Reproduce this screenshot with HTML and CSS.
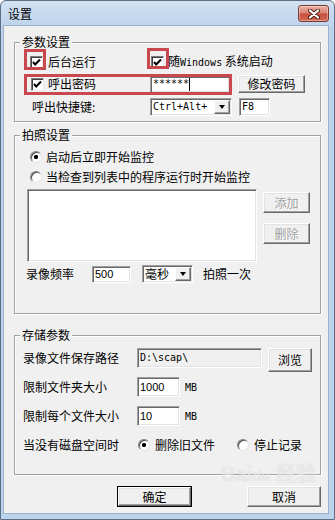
FILE: index.html
```html
<!DOCTYPE html>
<html lang="zh-CN">
<head>
    <meta charset="UTF-8">
    <meta name="viewport" content="width=device-width, initial-scale=1.0">
    <title>设置</title>
    <link rel="stylesheet" href="styles.css">
</head>
<body>
    <div class="window">
        <div class="titlebar">
            <span class="title">设置</span>
            <span class="close">
                <svg width="14" height="10" viewBox="0 0 14 10">
                    <path d="M3 1.5 L11 8.5 M11 1.5 L3 8.5" stroke="#4a1a14" stroke-width="4" stroke-linecap="round"/>
                    <path d="M3 1.5 L11 8.5 M11 1.5 L3 8.5" stroke="#fff" stroke-width="2.2" stroke-linecap="round"/>
                </svg>
            </span>
        </div>

        <div class="client">
            <!-- 参数设置 -->
            <div class="group group-params">
                <span class="legend">参数设置</span>
                <div class="row row-bg">
                    <span class="check check-bg">
                        <span class="box"><svg width="11" height="11" viewBox="0 0 11 11"><path d="M2 5 L4.2 7.5 L9 2.5" stroke="#000" stroke-width="2" fill="none"/></svg></span>
                        后台运行
                    </span>
                    <span class="check check-startup">
                        <span class="box"><svg width="11" height="11" viewBox="0 0 11 11"><path d="M2 5 L4.2 7.5 L9 2.5" stroke="#000" stroke-width="2" fill="none"/></svg></span>
                        <span>随<span class="mono">Windows</span> 系统启动</span>
                    </span>
                </div>
                <div class="row row-pwd">
                    <span class="check check-pwd">
                        <span class="box"><svg width="11" height="11" viewBox="0 0 11 11"><path d="M2 5 L4.2 7.5 L9 2.5" stroke="#000" stroke-width="2" fill="none"/></svg></span>
                        呼出密码
                    </span>
                    <span class="edit edit-pass mono">******<span class="caret"></span></span>
                    <span class="btn btn-change">修改密码</span>
                </div>
                <div class="row row-hotkey">
                    <span class="label label-hotkey">呼出快捷键:</span>
                    <span class="combo combo-keys"><span class="mono">Ctrl+Alt+</span><span class="drop"><span class="arrow"></span></span></span>
                    <span class="edit edit-key mono">F8</span>
                </div>

                <!-- annotation frames -->
                <span class="mark mark-bg"></span>
                <span class="mark mark-startup"></span>
                <span class="mark mark-pwd"></span>
            </div>

            <!-- 拍照设置 -->
            <div class="group group-photo">
                <span class="legend">拍照设置</span>
                <div class="row row-radio">
                    <span class="radio on"></span>
                    <span>启动后立即开始监控</span>
                </div>
                <div class="row row-radio row-radio-2">
                    <span class="radio"></span>
                    <span>当检查到列表中的程序运行时开始监控</span>
                </div>
                <div class="row row-list">
                    <div class="listbox"></div>
                    <div class="side">
                        <span class="btn btn-off btn-add">添加</span>
                        <span class="btn btn-off btn-del">删除</span>
                    </div>
                </div>
                <div class="row row-freq">
                    <span class="label label-freq">录像频率</span>
                    <span class="edit edit-freq num">500</span>
                    <span class="combo combo-unit"><span>毫秒</span><span class="drop"><span class="arrow"></span></span></span>
                    <span class="label label-once">拍照一次</span>
                </div>
            </div>

            <!-- 存储参数 -->
            <div class="group group-store">
                <span class="legend">存储参数</span>
                <div class="row row-path">
                    <span class="label label-store">录像文件保存路径</span>
                    <span class="edit edit-path mono">D:\scap\</span>
                    <span class="btn btn-browse">浏览</span>
                </div>
                <div class="row row-size">
                    <span class="label label-store">限制文件夹大小</span>
                    <span class="edit edit-size num">1000</span>
                    <span class="unit mono">MB</span>
                </div>
                <div class="row row-size row-size-2">
                    <span class="label label-store">限制每个文件大小</span>
                    <span class="edit edit-size num">10</span>
                    <span class="unit mono">MB</span>
                </div>
                <div class="row row-disk">
                    <span class="label label-disk">当没有磁盘空间时</span>
                    <span class="option"><span class="radio on"></span>删除旧文件</span>
                    <span class="option option-stop"><span class="radio"></span>停止记录</span>
                </div>
            </div>

            <div class="row row-actions">
                <span class="btn btn-default">确定</span>
                <span class="btn btn-cancel">取消</span>
            </div>
        </div>

        <span class="watermark">Bai<span class="paw">du</span> 经验</span>
    </div>
</body>
</html>
```

FILE: styles.css
```css
* {
    box-sizing: border-box;
}
body {
    margin: 0;
    font-family: "Noto Sans CJK SC", sans-serif;
    font-size: 12px;
    line-height: 14px;
    color: #000;
    background: #fff;
}
.mono {
    font-family: "DejaVu Sans Mono", "Noto Sans CJK SC", monospace;
    font-size: 10px;
}
.num {
    font-family: "Liberation Sans", sans-serif;
    font-size: 11px;
}

/* window frame */
.window {
    position: relative;
    width: 335px;
    height: 520px;
    display: flex;
    flex-direction: column;
    padding: 0 6px 6px 3px;
    border: 1px solid #5d6f86;
    border-radius: 6px 6px 0 0;
    background: linear-gradient(#d2e1f2, #bdd3ec 26px, #bcd3ec);
}
.titlebar {
    height: 25px;
    display: flex;
    justify-content: space-between;
    align-items: flex-start;
}
.title {
    margin: 6px 0 0 4px;
    font-size: 12px;
}
.close {
    width: 31px;
    height: 17px;
    margin: 4px -1px 0 0;
    display: flex;
    align-items: center;
    justify-content: center;
    border: 1px solid #7a3b32;
    border-radius: 3px;
    background: linear-gradient(#eab0a3, #d98373 45%, #c7503f 55%, #d26a52);
    box-shadow: inset 0 0 0 1px rgba(255,255,255,0.35);
}
.client {
    flex: 1;
    padding: 16px 0 0 10px;
    background: #f0f0f0;
    box-shadow: 0 0 0 1px #9fb4cc;
}

/* group boxes */
.group {
    position: relative;
    width: 307px;
    border: 1px solid #a0a0a0;
    box-shadow: inset 1px 1px 0 #fff, 1px 1px 0 #fff;
}
.legend {
    position: absolute;
    top: -8px;
    left: 5px;
    padding: 0 2px;
    background: #f0f0f0;
}
.group-params {
    height: 80px;
    padding-top: 12px;
}
.group-photo {
    height: 179px;
    margin-top: 13px;
    padding-top: 14px;
}
.group-store {
    height: 140px;
    margin-top: 21px;
    padding-top: 12px;
}

.row {
    display: flex;
    align-items: center;
}
.label {
    white-space: nowrap;
}

/* checkboxes and radios */
.check {
    display: flex;
    align-items: center;
    white-space: nowrap;
}
.box {
    width: 13px;
    height: 13px;
    flex: none;
    display: flex;
    align-items: center;
    justify-content: center;
    background: #fff;
    border: 1px solid;
    border-color: #7c7c7c #e8e8e8 #e8e8e8 #7c7c7c;
    box-shadow: inset 1px 1px 0 #404040;
}
.radio {
    width: 12px;
    height: 12px;
    flex: none;
    border-radius: 50%;
    background: #fff;
    border: 1px solid;
    border-color: #808080 #e4e4e4 #e4e4e4 #808080;
    box-shadow: inset 1px 1px 0 #505050;
}
.radio.on {
    background: radial-gradient(circle at 50% 50%, #000 1.8px, #fff 2.4px);
}

/* edits, combos, buttons */
.edit {
    display: flex;
    align-items: center;
    padding-left: 2px;
    background: #fff;
    border: 1px solid;
    border-color: #a0a0a0 #fff #fff #a0a0a0;
    box-shadow: inset 1px 1px 0 #696969, inset -1px -1px 0 #e3e3e3;
}
.combo {
    display: flex;
    align-items: center;
    justify-content: space-between;
    padding: 0 1px 0 2px;
    background: #fff;
    border: 1px solid;
    border-color: #a0a0a0 #fff #fff #a0a0a0;
    box-shadow: inset 1px 1px 0 #696969, inset -1px -1px 0 #e3e3e3;
}
.drop {
    width: 16px;
    height: 14px;
    display: flex;
    align-items: center;
    justify-content: center;
    background: #f0f0f0;
    border: 1px solid;
    border-color: #fff #696969 #696969 #fff;
    box-shadow: inset -1px -1px 0 #a0a0a0;
}
.arrow {
    width: 0;
    height: 0;
    border-left: 3.5px solid transparent;
    border-right: 3.5px solid transparent;
    border-top: 4px solid #000;
}
.btn {
    display: flex;
    align-items: center;
    justify-content: center;
    background: #f0f0f0;
    border: 1px solid;
    border-color: #fff #696969 #696969 #fff;
    box-shadow: inset -1px -1px 0 #a0a0a0, inset 1px 1px 0 #e3e3e3;
}
.btn-off {
    color: #a0a0a0;
    text-shadow: 1px 1px 0 #fff;
}
.btn-default {
    outline: 1px solid #000;
    outline-offset: -1px;
    border-width: 2px;
}

/* 参数设置 rows */
.row-bg {
    height: 14px;
    padding-left: 15px;
}
.check-bg {
    width: 121px;
    gap: 5px;
}
.check-startup {
    gap: 4px;
}
.row-pwd {
    height: 18px;
    margin-top: 6px;
    padding-left: 16px;
}
.check-pwd {
    width: 119px;
    gap: 4px;
}
.edit-pass {
    width: 80px;
    height: 17px;
}
.caret {
    width: 1px;
    height: 13px;
    background: #000;
}
.btn-change {
    width: 67px;
    height: 18px;
    margin-left: 8px;
}
.row-hotkey {
    height: 18px;
    margin-top: 5px;
    padding-left: 17px;
}
.label-hotkey {
    width: 118px;
}
.combo-keys {
    width: 82px;
    height: 18px;
}
.edit-key {
    width: 31px;
    height: 18px;
    margin-left: 7px;
}

/* red annotation frames */
.mark {
    position: absolute;
    border: 3px solid #c9474e;
}
.mark-bg {
    left: 9px;
    top: 6px;
    width: 22px;
    height: 21px;
}
.mark-startup {
    left: 132px;
    top: 5px;
    width: 22px;
    height: 21px;
}
.mark-pwd {
    left: 9px;
    top: 31px;
    width: 208px;
    height: 21px;
}

/* 拍照设置 rows */
.row-radio {
    height: 14px;
    padding-left: 15px;
    gap: 4px;
}
.row-radio-2 {
    margin-top: 6px;
}
.row-list {
    align-items: flex-start;
    margin-top: 5px;
    padding-left: 12px;
}
.listbox {
    width: 230px;
    height: 73px;
    background: #fff;
    border: 1px solid;
    border-color: #a0a0a0 #fff #fff #a0a0a0;
    box-shadow: inset 1px 1px 0 #696969, inset -1px -1px 0 #e3e3e3;
}
.side {
    display: flex;
    flex-direction: column;
    margin-left: 6px;
}
.btn-add,
.btn-del {
    width: 47px;
    height: 21px;
}
.btn-add {
    margin-top: 3px;
}
.btn-del {
    margin-top: 10px;
}
.row-freq {
    height: 18px;
    margin-top: 3px;
    padding-left: 11px;
}
.label-freq {
    width: 66px;
}
.edit-freq {
    width: 39px;
    height: 17px;
}
.combo-unit {
    width: 51px;
    height: 18px;
    margin-left: 11px;
}
.label-once {
    margin-left: 10px;
}

/* 存储参数 rows */
.row-path {
    align-items: flex-start;
    padding-left: 8px;
}
.label-store {
    width: 114px;
    line-height: 20px;
}
.edit-path {
    width: 125px;
    height: 20px;
    background: #f0f0f0;
}
.btn-browse {
    width: 44px;
    height: 24px;
    margin-left: 6px;
}
.row-size {
    height: 20px;
    margin-top: 5px;
    padding-left: 8px;
}
.row-size-2 {
    margin-top: 9px;
}
.edit-size {
    width: 43px;
    height: 20px;
}
.unit {
    margin: 2px 0 0 5px;
}
.row-disk {
    height: 14px;
    margin-top: 12px;
    padding-left: 8px;
}
.label-disk {
    width: 115px;
}
.option {
    display: flex;
    align-items: center;
    gap: 5px;
}
.option-stop {
    margin-left: 22px;
}

/* dialog buttons */
.row-actions {
    margin-top: 11px;
    padding-left: 103px;
}
.btn-default,
.btn-cancel {
    height: 21px;
}
.btn-default {
    width: 75px;
}
.btn-cancel {
    width: 74px;
    margin-left: 55px;
}

.watermark {
    position: absolute;
    left: 220px;
    top: 462px;
    font-family: "Liberation Sans", "Noto Sans CJK SC", sans-serif;
    font-size: 20px;
    font-weight: bold;
    line-height: 22px;
    color: rgba(255,255,255,0.5);
    text-shadow: 0 0 1px rgba(150,150,150,0.35);
    pointer-events: none;
}
.paw {
    font-size: 15px;
}
```
